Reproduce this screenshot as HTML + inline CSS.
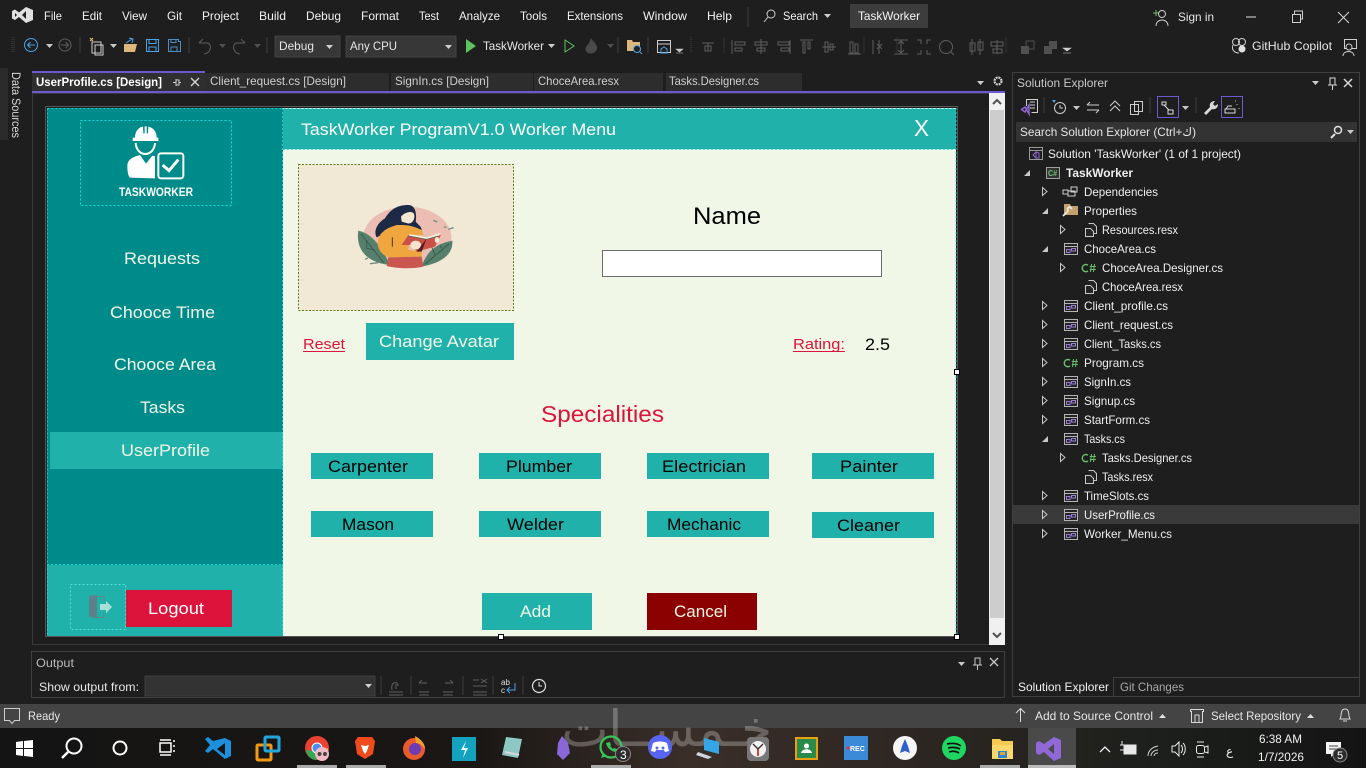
<!DOCTYPE html>
<html><head><meta charset="utf-8"><title>TaskWorker</title>
<style>
html,body{margin:0;padding:0;background:#1e1e1e;overflow:hidden}
svg{display:block}
text{font-family:"Liberation Sans","DejaVu Sans",sans-serif;font-size:12px;fill:#e6e6e6;white-space:pre}
.m text{font-size:12px;fill:#f1f1f1}
.d{font-size:17px}
.tr text{font-size:12px;fill:#efefef}
.ic{fill:none;stroke:#cfcfcf;stroke-width:1}
.dim{fill:none;stroke:#5e5e5e;stroke-width:1}
</style></head><body>
<svg width="1366" height="768" viewBox="0 0 1366 768" xmlns="http://www.w3.org/2000/svg">
<defs>
<symbol id="form" viewBox="0 0 16 16" overflow="visible"><rect x="1.500" y="2.500" width="13" height="11" fill="#252526" stroke="#b4b4b4"/><path d="M2 5.500h12" stroke="#b4b4b4"/><rect x="3.500" y="8.500" width="3.500" height="3" fill="none" stroke="#9a7fd6"/><rect x="8.500" y="7.500" width="4" height="2.500" fill="none" stroke="#9a7fd6"/></symbol>
<symbol id="doc" viewBox="0 0 16 16" overflow="visible"><path d="M5.500 1.500h5l3 3v7h-3M2.500 6.500h5l3 3v5h-8z" fill="#252526" stroke="#c8c8c8"/></symbol>
<symbol id="cs" viewBox="0 0 16 16" overflow="visible"><path d="M7 5.200A3.600 3.600 0 1 0 7 11" fill="none" stroke="#69c06a" stroke-width="1.400"/><path d="M10.500 4l-1 8M13.500 4l-1 8M8.800 6.500h6M8.800 9.500h6" stroke="#69c06a"/></symbol>
</defs>

<rect width="1366" height="768" fill="#1e1e1e"/>

<!-- VS logo -->
<path d="M26 7l7 3v10l-7 3-7-6-4 3-3-1.500V11l3-1.500 4 3zM26 11l-4 4 4 4zM15 13v4l2-2z" fill="#e0e0e0" fill-rule="evenodd"/>

<!-- menu -->
<g class="m">
<text x="44" y="20" textLength="18" lengthAdjust="spacingAndGlyphs">File</text>
<text x="82" y="20" textLength="20" lengthAdjust="spacingAndGlyphs">Edit</text>
<text x="122" y="20" textLength="25" lengthAdjust="spacingAndGlyphs">View</text>
<text x="167" y="20" textLength="15" lengthAdjust="spacingAndGlyphs">Git</text>
<text x="202" y="20" textLength="37" lengthAdjust="spacingAndGlyphs">Project</text>
<text x="259" y="20" textLength="27" lengthAdjust="spacingAndGlyphs">Build</text>
<text x="306" y="20" textLength="35" lengthAdjust="spacingAndGlyphs">Debug</text>
<text x="361" y="20" textLength="38" lengthAdjust="spacingAndGlyphs">Format</text>
<text x="419" y="20" textLength="20" lengthAdjust="spacingAndGlyphs">Test</text>
<text x="459" y="20" textLength="41" lengthAdjust="spacingAndGlyphs">Analyze</text>
<text x="520" y="20" textLength="27" lengthAdjust="spacingAndGlyphs">Tools</text>
<text x="567" y="20" textLength="56" lengthAdjust="spacingAndGlyphs">Extensions</text>
<text x="643" y="20" textLength="44" lengthAdjust="spacingAndGlyphs">Window</text>
<text x="707" y="20" textLength="25" lengthAdjust="spacingAndGlyphs">Help</text>
<text x="783" y="20" textLength="35" lengthAdjust="spacingAndGlyphs">Search</text>
</g>
<path d="M748 7v20" stroke="#3f3f3f"/>
<circle cx="771" cy="14" r="4" fill="none" stroke="#d0d0d0"/><path d="M768 17l-4 5" stroke="#d0d0d0"/>
<path d="M824 14h7l-3.500 4z" fill="#d0d0d0"/>
<rect x="850" y="4" width="78" height="24" fill="#3d3d3d"/>
<text x="858" y="20" textLength="62" lengthAdjust="spacingAndGlyphs" style="fill:#f5f5f5">TaskWorker</text>
<!-- sign in -->
<path d="M1153 13h6M1156 10v6" stroke="#67c15e"/><circle cx="1162" cy="14" r="3.500" class="ic"/><path d="M1156 26c0-8 12-8 12 0" class="ic"/>
<text x="1178" y="21" textLength="36" lengthAdjust="spacingAndGlyphs">Sign in</text>
<path d="M1246 17h10" stroke="#e0e0e0"/>
<rect x="1292.500" y="14.500" width="8" height="8" class="ic"/><path d="M1294.500 14v-3h8v8h-2" class="ic"/>
<path d="M1338 12l11 11M1349 12l-11 11" stroke="#d8d8d8"/>

<!-- toolbar -->
<path d="M12 37v16M14 37v16" stroke="#444" stroke-dasharray="1 1"/>
<circle cx="31" cy="45" r="6.500" fill="none" stroke="#4aa3e8"/><path d="M35 45h-7M30.500 42l-3 3 3 3" fill="none" stroke="#4aa3e8"/>
<path d="M46 44h7l-3.500 4z" fill="#c8c8c8"/>
<circle cx="65" cy="45" r="6" class="dim"/><path d="M61 45h7M65.500 42l3 3-3 3" class="dim"/>
<path d="M80 37v16" stroke="#3f3f3f"/>
<rect x="92" y="42" width="9" height="11" class="ic"/><rect x="96" y="46" width="8" height="10" class="ic" transform="translate(-1,-1)"/><path d="M90 38l3 3M93 38l-3 3" stroke="#e2c275"/>
<path d="M110 44h7l-3.500 4z" fill="#c8c8c8"/>
<path d="M124 44h13l-2 8h-11z" fill="#dcb67a"/><path d="M126 43l6-4M129 38l4 1-1 4" fill="none" stroke="#4aa3e8"/>
<path d="M146.500 39.500h12v12h-12zM149 39.500v4h7v-4M149 51v-4h7v4" fill="none" stroke="#4aa3e8"/>
<path d="M168.500 39.500h10v2h2v10h-12zM171 39.500v3h5v-3M171 51v-4h6v4" fill="none" stroke="#4a8fc8"/>
<path d="M189 37v16" stroke="#3f3f3f"/>
<path d="M199 43l4-4M199 43h8c5 0 5 10-3 11" class="dim"/><path d="M219 44h7l-3.500 4z" fill="#505050"/>
<path d="M245 43l-4-4M245 43h-8c-5 0-5 10 3 11" class="dim"/><path d="M254 44h7l-3.500 4z" fill="#505050"/>
<path d="M267 37v16" stroke="#3f3f3f"/>
<rect x="275" y="36" width="65" height="21" fill="#373737" stroke="#434343"/>
<text x="279" y="50" textLength="35" lengthAdjust="spacingAndGlyphs">Debug</text><path d="M326 45h7l-3.500 4z" fill="#d0d0d0"/>
<rect x="346" y="36" width="110" height="21" fill="#373737" stroke="#434343"/>
<text x="350" y="50" textLength="47" lengthAdjust="spacingAndGlyphs">Any CPU</text><path d="M445 45h7l-3.500 4z" fill="#d0d0d0"/>
<path d="M466 39l10 7-10 7z" fill="#5fc45f"/>
<text x="483" y="50" textLength="61" lengthAdjust="spacingAndGlyphs">TaskWorker</text>
<path d="M548 44h7l-3.500 4z" fill="#d0d0d0"/>
<path d="M565 40l9 6-9 6z" fill="none" stroke="#5fc45f"/>
<path d="M591 38c3 5 6 6 6 10 0 6-9 7-11 3-2-5 3-5 5-13z" fill="#4a4a4a"/><path d="M607 44h7l-3.500 4z" fill="#505050"/>
<path d="M618 37v16" stroke="#3f3f3f"/>
<path d="M627 40h5l1 2h7v9h-13z" fill="#dcb67a"/><circle cx="637" cy="49" r="3.500" fill="#222" stroke="#4aa3e8"/><path d="M640 52l2 2" stroke="#4aa3e8"/>
<path d="M648 37v16" stroke="#3f3f3f"/>
<rect x="657.500" y="40.500" width="13" height="12" class="ic"/><path d="M657 44h13" class="ic"/><path d="M661 53v-4l3-2 3 2v4z" fill="none" stroke="#4aa3e8"/>
<path d="M676 49h7l-3.500 3zM676 53h7" fill="#c8c8c8" stroke="#c8c8c8" stroke-width=".6"/>
<path d="M691 37v16" stroke="#444" stroke-dasharray="1 1"/>
<path d="M702 43h12M708 43v8M705 46h6v5h-6z" class="dim"/>
<path d="M724 37v16M897 37v16M1006 37v16M864 37v16" stroke="#333"/>
<path d="M732 40v14M735 42h10v3h-10zM735 48h7v3h-7z" class="dim"/>
<path d="M761 39v15M755 42h12v3h-12zM757 48h8v3h-8z" class="dim"/>
<path d="M790 40v14M778 42h11v3h-11zM781 48h8v3h-8z" class="dim"/>
<path d="M800 40h13M803 42v11h2V42zM808 42v7h2v-7z" class="dim"/>
<path d="M822 47h14M825 42h3v10h-3zM830 44h3v6h-3z" class="dim"/>
<path d="M848 54h13M850 42v11h3V42zM855 44v9h3V44z" class="dim"/>
<path d="M873 40v14M879 40v14M877 44l5 5M882 44l-5 5" class="dim"/>
<path d="M894 40h14M894 54h14M901 41v12M898 44l3-3 3 3M898 50l3 3 3-3" class="dim"/>
<path d="M917 40h4v4M931 40h-4v4M917 54h4v-4M931 54h-4v-4" class="dim"/>
<circle cx="946" cy="47" r="6.500" class="dim"/><path d="M951 52l3 3" class="dim"/>
<path d="M972 39v16M980 39v16M970 43h5v8h-5zM978 42h5v8h-5z" class="dim"/>
<path d="M996 47h1M997 40v14M991 42h12v4h-12zM993 49h9v4h-9z" class="dim"/>
<path d="M1021 46h8v8h-8z" fill="#505050"/><path d="M1026 41h8v8h-8z" fill="none" stroke="#505050"/>
<path d="M1044 46h8v8h-8zM1049 41h8v8h-8z" fill="#505050"/>
<path d="M1063 48h8l-4 3zM1063 53h8" fill="#d0d0d0" stroke="#d0d0d0" stroke-width=".6"/>
<!-- copilot -->
<circle cx="1236" cy="42" r="3.500" class="ic"/><circle cx="1242" cy="42" r="3.500" class="ic"/><path d="M1233 45c-2 5 2 8 6 8" class="ic"/><circle cx="1242" cy="49" r="3.500" fill="#e0e0e0"/>
<text x="1252" y="50" textLength="80" lengthAdjust="spacingAndGlyphs">GitHub Copilot</text>
<rect x="1344.500" y="39.500" width="12" height="9" class="ic"/><circle cx="1349" cy="47" r="3" fill="#1e1e1e" stroke="#cfcfcf"/><path d="M1343 56c0-6 11-6 11 0" class="ic"/>

<!-- data sources vertical tab -->
<rect x="0" y="68" width="8" height="72" fill="#2b2b2b"/>
<text transform="translate(12,72) rotate(90)" textLength="66" lengthAdjust="spacingAndGlyphs" style="fill:#d8d8d8">Data Sources</text>

<!-- document tabs -->
<rect x="32" y="72" width="173" height="20" fill="#2f2f2f"/>
<rect x="32" y="71" width="173" height="2" fill="#6a5acd"/>
<rect x="32" y="91" width="973" height="2" fill="#6a5acd"/>
<rect x="205" y="73" width="184" height="18" fill="#2d2d2d"/>
<rect x="391" y="73" width="142" height="18" fill="#2d2d2d"/>
<rect x="534" y="73" width="129" height="18" fill="#2d2d2d"/>
<rect x="666" y="73" width="136" height="18" fill="#2d2d2d"/>
<text x="36" y="86" textLength="126" lengthAdjust="spacingAndGlyphs" style="fill:#fff;font-weight:700">UserProfile.cs [Design]</text>
<path d="M176 79v7M173 82.500h3M176 80h3v5h-3M179 82.500h2" stroke="#cfcfcf" fill="none"/>
<path d="M191 78l8 8M199 78l-8 8" stroke="#d8d8d8" stroke-width="1.300"/>
<text x="210" y="85" textLength="136" lengthAdjust="spacingAndGlyphs" style="fill:#cfcfcf">Client_request.cs [Design]</text>
<text x="395" y="85" textLength="94" lengthAdjust="spacingAndGlyphs" style="fill:#cfcfcf">SignIn.cs [Design]</text>
<text x="538" y="85" textLength="81" lengthAdjust="spacingAndGlyphs" style="fill:#cfcfcf">ChoceArea.resx</text>
<text x="669" y="85" textLength="90" lengthAdjust="spacingAndGlyphs" style="fill:#cfcfcf">Tasks.Designer.cs</text>
<path d="M977 81h7l-3.500 4z" fill="#d0d0d0"/>
<circle cx="998" cy="81" r="3.500" fill="none" stroke="#d0d0d0" stroke-width="2.200" stroke-dasharray="2 .8"/>

<!-- designer frame -->
<rect x="32.500" y="93.500" width="972" height="551" fill="#1e1e1e" stroke="#3a3a3a"/>
<rect x="989" y="93" width="16" height="552" fill="#f0f0f0"/>
<rect x="990" y="110" width="14" height="508" fill="#cdcdcd"/>
<path d="M993 104l4-4 4 4" fill="none" stroke="#505050" stroke-width="2"/>
<path d="M993 633l4 4 4-4" fill="none" stroke="#505050" stroke-width="2"/>

<!-- form -->
<rect x="45.500" y="106.500" width="912" height="530" fill="#1e1e1e" stroke="#555"/>
<rect x="47" y="108" width="909" height="528" fill="#f0f7e6"/>
<rect x="47" y="108" width="236" height="528" fill="#008b8b"/>
<rect x="283" y="109" width="673" height="40" fill="#20b2aa"/>
<rect x="47" y="565" width="236" height="71" fill="#20b2aa"/>
<rect x="50" y="432" width="233" height="37" fill="#20b2aa"/>
<path d="M47.500 108.500h908.500v527M47.500 108.500v527M282.500 108v528M283 149.500h673M47 564.500h236" fill="none" stroke="#19e0dc" stroke-dasharray="2 2" opacity=".85"/>
<text x="301" y="135" textLength="315" lengthAdjust="spacingAndGlyphs" style="font-size:17px;fill:#fff">TaskWorker ProgramV1.0 Worker Menu</text>
<text x="914" y="136" textLength="15" lengthAdjust="spacingAndGlyphs" style="font-size:23px;fill:#fff">X</text>

<!-- logo -->
<rect x="80.500" y="120.500" width="151" height="85" fill="none" stroke="#14e0dc" stroke-dasharray="2 2"/>
<g transform="translate(40,105) scale(.33333)" fill="#fff">
<path d="M285 98c0-20 12-32 24-33l1 20 4 0 0-21 6 0 0 21 4 0 1-20c13 2 25 14 25 33h5v10h-77v-10z"/>
<path d="M287 114c3 44 55 44 58 0" fill="none" stroke="#fff" stroke-width="6"/>
<path d="M262 182c0-16 13-26 38-32l18 26 19-24 8 2v66l-75-2c-6-4-8-20-8-36z"/>
<rect x="355" y="145" width="75" height="75" rx="8" fill="none" stroke="#fff" stroke-width="6"/>
<path d="M368 180l19 17 28-33" fill="none" stroke="#fff" stroke-width="9"/>
</g>
<text x="119" y="196" textLength="74" lengthAdjust="spacingAndGlyphs" style="font-size:12px;font-weight:700;fill:#fff">TASKWORKER</text>

<!-- sidebar text -->
<g>
<text x="124" y="264" textLength="76" lengthAdjust="spacingAndGlyphs" style="font-size:17px;fill:#f2f7e8">Requests</text>
<text x="110" y="318" textLength="105" lengthAdjust="spacingAndGlyphs" style="font-size:17px;fill:#f2f7e8">Chooce Time</text>
<text x="114" y="370" textLength="102" lengthAdjust="spacingAndGlyphs" style="font-size:17px;fill:#f2f7e8">Chooce Area</text>
<text x="140" y="413" textLength="45" lengthAdjust="spacingAndGlyphs" style="font-size:17px;fill:#f2f7e8">Tasks</text>
<text x="121" y="456" textLength="89" lengthAdjust="spacingAndGlyphs" style="font-size:17px;fill:#f2f7e8">UserProfile</text>
</g>

<!-- logout -->
<rect x="70.500" y="584.500" width="55" height="45" fill="none" stroke="#4fe0dc" stroke-dasharray="2 2"/>
<path d="M89 596l8-1v23l-8-1z" fill="#5f7f8a"/><path d="M97 596.500h7v5M97 617.500h7v-5" fill="none" stroke="#5f8585"/>
<path d="M100 604h6v-3l6 6-6 6v-3h-6z" fill="#a8e0d8"/>
<rect x="126" y="590" width="106" height="37" fill="#dc143c"/>
<text x="148" y="614" textLength="56" lengthAdjust="spacingAndGlyphs" style="font-size:17px;fill:#fff">Logout</text>

<!-- avatar -->
<rect x="298.500" y="164.500" width="215" height="146" fill="#f1e8d6" stroke="#5c7a10" stroke-dasharray="2 1.500"/>
<g transform="translate(295,160) scale(.33333)">
<ellipse cx="337" cy="232" rx="132" ry="92" fill="#ecbdb2"/>
<path d="M190 212C230 220 260 260 285 315 230 310 180 280 190 212z" fill="#567f6c"/>
<path d="M472 242C430 250 395 270 380 320 430 310 475 290 472 242z" fill="#567f6c"/>
<path d="M198 222l68 86M462 252l-72 60M215 240v25M240 270l-25-5M420 285l-10-25M440 265l-5-10" stroke="#33574a" stroke-width="2.500" fill="none"/>
<path d="M340 135C365 135 365 170 362 185 370 195 380 200 380 210L300 205 245 232C235 215 245 190 270 175 285 150 305 135 340 135z" fill="#1c2a45"/>
<path d="M318 170C330 155 355 150 358 165 360 180 350 193 338 190L320 185z" fill="#f6e6d2"/>
<path d="M305 195C325 195 345 193 380 210L385 225 345 225 340 270 380 275 380 290 280 292C250 280 240 250 255 225 270 205 290 200 305 195z" fill="#efa63e"/>
<path d="M292 232v28" stroke="#4a331c" stroke-width="3"/>
<path d="M280 292L380 290 385 320C350 328 300 325 275 318z" fill="#cb564f"/>
<path d="M320 255L340 225 395 235 438 225 420 260 390 268 365 275 350 255z" fill="#cc5048"/>
<path d="M342 222L395 232 438 218 430 228 395 238 342 228z" fill="#f5efdd"/>
<path d="M342 228L395 238 430 228" fill="none" stroke="#3e6a55" stroke-width="2"/>
<path d="M365 275L395 235 380 275z" fill="#4e2020"/>
<ellipse cx="362" cy="255" rx="16" ry="13" fill="#f7e5d0"/>
<ellipse cx="426" cy="240" rx="7" ry="9" fill="#f7e5d0"/>
<path d="M415 181l12 5M447 200l7 3M460 208l16-5M210 298l9-4M225 311l25-3" stroke="#6d8f81" stroke-width="4" fill="none"/>
</g>

<!-- Form controls -->
<text x="693" y="224" textLength="68" lengthAdjust="spacingAndGlyphs" style="font-size:24px;fill:#000">Name</text>
<rect x="602.500" y="250.500" width="279" height="26" fill="#fff" stroke="#6c6c6c"/>
<text x="303" y="349" textLength="42" lengthAdjust="spacingAndGlyphs" style="font-size:15px;fill:#dc143c">Reset</text><path d="M303 351.500h42" stroke="#dc143c"/>
<rect x="366" y="323" width="148" height="37" fill="#20b2aa"/>
<text x="379" y="347" textLength="120" lengthAdjust="spacingAndGlyphs" style="font-size:17px;fill:#f2f7e8">Change Avatar</text>
<text x="793" y="349" textLength="52" lengthAdjust="spacingAndGlyphs" style="font-size:15px;fill:#dc143c">Rating:</text><path d="M793 351.500h52" stroke="#dc143c"/>
<text x="865" y="350" textLength="25" lengthAdjust="spacingAndGlyphs" style="font-size:17px;fill:#000">2.5</text>
<text x="541" y="422" textLength="123" lengthAdjust="spacingAndGlyphs" style="font-size:23px;fill:#dc143c">Specialities</text>

<g fill="#20b2aa">
<rect x="311" y="453" width="122" height="26"/><rect x="479" y="453" width="122" height="26"/><rect x="647" y="453" width="122" height="26"/><rect x="812" y="453" width="122" height="26"/>
<rect x="311" y="511" width="122" height="26"/><rect x="479" y="511" width="122" height="26"/><rect x="647" y="511" width="122" height="26"/><rect x="812" y="512" width="122" height="26"/>
</g>
<g>
<text x="328" y="472" textLength="80" lengthAdjust="spacingAndGlyphs" style="font-size:17px;fill:#000">Carpenter</text>
<text x="506" y="472" textLength="66" lengthAdjust="spacingAndGlyphs" style="font-size:17px;fill:#000">Plumber</text>
<text x="662" y="472" textLength="84" lengthAdjust="spacingAndGlyphs" style="font-size:17px;fill:#000">Electrician</text>
<text x="840" y="472" textLength="58" lengthAdjust="spacingAndGlyphs" style="font-size:17px;fill:#000">Painter</text>
<text x="342" y="530" textLength="52" lengthAdjust="spacingAndGlyphs" style="font-size:17px;fill:#000">Mason</text>
<text x="507" y="530" textLength="57" lengthAdjust="spacingAndGlyphs" style="font-size:17px;fill:#000">Welder</text>
<text x="667" y="530" textLength="74" lengthAdjust="spacingAndGlyphs" style="font-size:17px;fill:#000">Mechanic</text>
<text x="837" y="531" textLength="63" lengthAdjust="spacingAndGlyphs" style="font-size:17px;fill:#000">Cleaner</text>
</g>
<rect x="482" y="593" width="110" height="37" fill="#20b2aa"/>
<text x="520" y="617" textLength="31" lengthAdjust="spacingAndGlyphs" style="font-size:17px;fill:#f2f7e8">Add</text>
<rect x="647" y="593" width="110" height="37" fill="#8b0000"/>
<text x="674" y="617" textLength="53" lengthAdjust="spacingAndGlyphs" style="font-size:17px;fill:#f2f7e8">Cancel</text>

<!-- handles -->
<g fill="#fff" stroke="#000"><rect x="954.500" y="369.500" width="5" height="5"/><rect x="498.500" y="634.500" width="5" height="5"/><rect x="954.500" y="634.500" width="5" height="5"/></g>

<!-- solution explorer -->
<rect x="1012.500" y="72.500" width="347" height="624" fill="#1e1e1e" stroke="#3f3f3f"/>
<path d="M1012.500 677.500V696.500H1113.500V677.500H1359.500" fill="none" stroke="#3f3f3f"/>
<rect x="1014" y="678" width="99" height="18" fill="#1e1e1e"/>
<text x="1017" y="87" textLength="91" lengthAdjust="spacingAndGlyphs" style="fill:#c8c8c8">Solution Explorer</text>
<path d="M1312 81h7l-3.500 4z" fill="#d0d0d0"/>
<path d="M1330 78h5v7h-5zM1332.500 85v5M1328 85h9" fill="none" stroke="#d8d8d8"/>
<path d="M1344 79l8 8M1352 79l-8 8" stroke="#d8d8d8" stroke-width="1.500"/>
<!-- SE toolbar -->
<path d="M1026.500 106v-6.500h11v13h-6M1030 102h5M1030 105h5M1030 108h5" fill="none" stroke="#cfcfcf"/><path d="M1021 110l4-3 4 7 0-9-4 7-4-3" fill="none" stroke="#8d66cf" stroke-width="1.500"/>
<path d="M1044 97v16" stroke="#3f3f3f"/>
<path d="M1052 100h4l-2 3z" fill="#4aa3e8"/><circle cx="1060" cy="108" r="5.500" class="ic"/><path d="M1060 105v3h3" class="ic"/>
<path d="M1073 106h7l-3.500 4z" fill="#c8c8c8"/>
<path d="M1087 105h12M1087 105l3-3M1099 110h-12M1099 110l-3 3" class="ic"/>
<path d="M1110 106l5-5 5 5M1110 111l5-5 5 5" class="ic"/>
<rect x="1134.500" y="101.500" width="8" height="10" class="ic"/><rect x="1130.500" y="104.500" width="8" height="10" class="ic"/>
<path d="M1150 97v16" stroke="#3f3f3f"/>
<rect x="1157.500" y="96.500" width="21" height="21" fill="none" stroke="#6a5acd" stroke-width="1"/>
<path d="M1162 102h4v3h-4zM1168 110h5v4h-5zM1164 105l5 5" fill="none" stroke="#d8d8d8"/>
<path d="M1182 106h7l-3.500 4z" fill="#c8c8c8"/>
<path d="M1196 97v16" stroke="#3f3f3f"/>
<path d="M1204 113l6-6c-1-3 1-6 5-6l-2 3 2 2 3-2c0 4-3 6-6 5l-6 6z" fill="#d8d8d8"/>
<rect x="1221.500" y="96.500" width="21" height="21" fill="none" stroke="#6a5acd"/>
<path d="M1225 109h10v4h-10zM1226 109l2-3h4" fill="none" stroke="#d8d8d8"/><path d="M1237 104v1M1239 108v1M1235 101h1" stroke="#e2c275"/>
<!-- search -->
<rect x="1016" y="122" width="341" height="20" fill="#333"/>
<text x="1020" y="136" textLength="176" lengthAdjust="spacingAndGlyphs">Search Solution Explorer (Ctrl+ك)</text>
<circle cx="1338" cy="130" r="3.500" fill="none" stroke="#e0e0e0" stroke-width="1.500"/><path d="M1335 134l-4 4" stroke="#e0e0e0" stroke-width="2"/>
<path d="M1347 130h7l-3.500 4z" fill="#c8c8c8"/>

<rect x="1013" y="505" width="346" height="19" fill="#3a3a3a"/>

<!-- tree icons -->
<g>
<rect x="1029.500" y="147.500" width="13" height="12" fill="none" stroke="#9a9a9a"/><path d="M1029 150.500h13" stroke="#9a9a9a"/><path d="M1033 155l3 3v-6l-3 3zM1036 152l3 1v5l-3 0" fill="none" stroke="#8d66cf"/>
<rect x="1046.500" y="167.500" width="13" height="11" fill="#333" stroke="#a0a0a0"/>
<text x="1048" y="176" textLength="9" lengthAdjust="spacingAndGlyphs" style="font-size:8px;font-weight:700;fill:#6fc16f">C#</text>
<rect x="1063" y="190" width="5" height="4" fill="none" stroke="#cfcfcf"/><rect x="1071" y="187" width="6" height="5" fill="none" stroke="#cfcfcf"/><rect x="1068" y="191" width="7" height="5" fill="none" stroke="#cfcfcf"/>
<path d="M1064 204h6l1 2h7v9h-14z" fill="#c4a06c"/><path d="M1063 216l5-5c-1-2 0-4 2-4l2 2" fill="none" stroke="#e8e8e8" stroke-width="1.800"/>
<use href="#doc" x="1083" y="222" width="16" height="16"/>
<use href="#form" x="1063" y="241" width="16" height="16"/>
<use href="#cs" x="1081" y="260" width="16" height="16"/>
<use href="#doc" x="1083" y="279" width="16" height="16"/>
<use href="#form" x="1063" y="298" width="16" height="16"/>
<use href="#form" x="1063" y="317" width="16" height="16"/>
<use href="#form" x="1063" y="336" width="16" height="16"/>
<use href="#cs" x="1063" y="355" width="16" height="16"/>
<use href="#form" x="1063" y="374" width="16" height="16"/>
<use href="#form" x="1063" y="393" width="16" height="16"/>
<use href="#form" x="1063" y="412" width="16" height="16"/>
<use href="#form" x="1063" y="431" width="16" height="16"/>
<use href="#cs" x="1081" y="450" width="16" height="16"/>
<use href="#doc" x="1083" y="469" width="16" height="16"/>
<use href="#form" x="1063" y="488" width="16" height="16"/>
<use href="#form" x="1063" y="507" width="16" height="16"/>
<use href="#form" x="1063" y="526" width="16" height="16"/>
</g>
<!-- arrows -->
<g fill="none" stroke="#c8c8c8">
<path d="M1042.500 187.500l4.500 4-4.500 4zM1060.500 225.500l4.500 4-4.500 4zM1060.500 263.500l4.500 4-4.500 4zM1042.500 301.500l4.500 4-4.500 4zM1042.500 320.500l4.500 4-4.500 4zM1042.500 339.500l4.500 4-4.500 4zM1042.500 358.500l4.500 4-4.500 4zM1042.500 377.500l4.500 4-4.500 4zM1042.500 396.500l4.500 4-4.500 4zM1042.500 415.500l4.500 4-4.500 4zM1060.500 453.500l4.500 4-4.500 4zM1042.500 491.500l4.500 4-4.500 4zM1042.500 510.500l4.500 4-4.500 4zM1042.500 529.500l4.500 4-4.500 4z"/>
</g>
<g fill="#c8c8c8">
<path d="M1024 177h6v-6zM1042 215h6v-6zM1042 253h6v-6zM1042 443h6v-6z" transform="translate(0,-1)"/>
</g>
<g class="tr">
<text x="1048" y="158" textLength="193" lengthAdjust="spacingAndGlyphs">Solution 'TaskWorker' (1 of 1 project)</text>
<text x="1066" y="177" textLength="67" lengthAdjust="spacingAndGlyphs" style="font-weight:700">TaskWorker</text>
<text x="1084" y="196" textLength="74" lengthAdjust="spacingAndGlyphs">Dependencies</text>
<text x="1084" y="215" textLength="53" lengthAdjust="spacingAndGlyphs">Properties</text>
<text x="1102" y="234" textLength="76" lengthAdjust="spacingAndGlyphs">Resources.resx</text>
<text x="1084" y="253" textLength="72" lengthAdjust="spacingAndGlyphs">ChoceArea.cs</text>
<text x="1102" y="272" textLength="121" lengthAdjust="spacingAndGlyphs">ChoceArea.Designer.cs</text>
<text x="1102" y="291" textLength="81" lengthAdjust="spacingAndGlyphs">ChoceArea.resx</text>
<text x="1084" y="310" textLength="84" lengthAdjust="spacingAndGlyphs">Client_profile.cs</text>
<text x="1084" y="329" textLength="89" lengthAdjust="spacingAndGlyphs">Client_request.cs</text>
<text x="1084" y="348" textLength="77" lengthAdjust="spacingAndGlyphs">Client_Tasks.cs</text>
<text x="1084" y="367" textLength="60" lengthAdjust="spacingAndGlyphs">Program.cs</text>
<text x="1084" y="386" textLength="47" lengthAdjust="spacingAndGlyphs">SignIn.cs</text>
<text x="1084" y="405" textLength="51" lengthAdjust="spacingAndGlyphs">Signup.cs</text>
<text x="1084" y="424" textLength="66" lengthAdjust="spacingAndGlyphs">StartForm.cs</text>
<text x="1084" y="443" textLength="41" lengthAdjust="spacingAndGlyphs">Tasks.cs</text>
<text x="1102" y="462" textLength="90" lengthAdjust="spacingAndGlyphs">Tasks.Designer.cs</text>
<text x="1102" y="481" textLength="51" lengthAdjust="spacingAndGlyphs">Tasks.resx</text>
<text x="1084" y="500" textLength="65" lengthAdjust="spacingAndGlyphs">TimeSlots.cs</text>
<text x="1084" y="519" textLength="71" lengthAdjust="spacingAndGlyphs">UserProfile.cs</text>
<text x="1084" y="538" textLength="88" lengthAdjust="spacingAndGlyphs">Worker_Menu.cs</text>
</g>
<text x="1018" y="691" textLength="91" lengthAdjust="spacingAndGlyphs" style="fill:#f1f1f1">Solution Explorer</text>
<text x="1120" y="691" textLength="64" lengthAdjust="spacingAndGlyphs" style="fill:#a8a8a8">Git Changes</text>

<!-- output panel -->
<rect x="31.500" y="651.500" width="973" height="46" fill="#1e1e1e" stroke="#3f3f3f"/>
<text x="36" y="667" textLength="38" lengthAdjust="spacingAndGlyphs" style="fill:#b8b8b8">Output</text>
<text x="39" y="691" textLength="100" lengthAdjust="spacingAndGlyphs">Show output from:</text>
<rect x="145" y="676" width="230" height="20" fill="#333" stroke="#3f3f3f"/>
<path d="M365 684h7l-3.500 4z" fill="#d0d0d0"/>
<path d="M381 676v19M411 676v19M463 676v19M493 676v19M523 676v19" stroke="#3f3f3f"/>
<path d="M389 692h14M389 695h14M392 690c-2-8 6-10 6-4M396 684v5" fill="none" stroke="#5e5e5e"/>
<path d="M419 692h10M419 695h10M419 683h8M419 683l3-3M443 692h10M443 695h10M445 683h8M453 683l-3-3" fill="none" stroke="#5e5e5e"/>
<path d="M473 680h6M473 692h14M473 695h14M473 686h14M481 679l6 4M487 679l-6 4" fill="none" stroke="#5e5e5e"/>
<text x="501" y="685" style="font-size:8px;fill:#e0e0e0">ab</text><text x="501" y="693" style="font-size:8px;fill:#e0e0e0">c</text>
<path d="M515 683v7h-7M510 687l-3 3 3 3" fill="none" stroke="#4aa3e8"/>
<circle cx="539" cy="686" r="6.500" fill="none" stroke="#e0e0e0" stroke-width="1.200"/><path d="M539 682v4h3" fill="none" stroke="#e0e0e0"/>
<path d="M958 662h7l-3.500 4z" fill="#c8c8c8"/>
<path d="M975 658h5v7h-5zM977.500 665v5M973 665h9" fill="none" stroke="#c8c8c8"/>
<path d="M990 658l8 8M998 658l-8 8" stroke="#c8c8c8" stroke-width="1.300"/>

<!-- status bar -->
<rect x="0" y="704" width="1366" height="24" fill="#444"/>
<path d="M4.500 708.500h15v12h-5l-2.500 3-2.500-3h-5z" fill="none" stroke="#cfcfcf"/>
<text x="28" y="720" textLength="32" lengthAdjust="spacingAndGlyphs">Ready</text>
<path d="M1020.500 722v-13M1016 713l4.500-4.500 4.500 4.500" fill="none" stroke="#d8d8d8"/>
<text x="1035" y="720" textLength="118" lengthAdjust="spacingAndGlyphs">Add to Source Control</text>
<path d="M1159 718h7l-3.500-4z" fill="#e0e0e0"/>
<path d="M1190.500 709.500h13v2h-1v11h-11v-11h-1zM1195 722v-7h4v7" fill="none" stroke="#d8d8d8"/>
<text x="1211" y="720" textLength="90" lengthAdjust="spacingAndGlyphs">Select Repository</text>
<path d="M1307 718h7l-3.500-4z" fill="#e0e0e0"/>
<path d="M1340 719c2-3 0-10 5-10s3 7 5 10zM1343 721h4" fill="none" stroke="#d8d8d8"/>

<!-- taskbar -->
<defs><linearGradient id="tb" x1="0" x2="1" y1="0" y2="0"><stop offset="0" stop-color="#141414"/><stop offset=".35" stop-color="#1a1715"/><stop offset=".5" stop-color="#3a2e28"/><stop offset=".68" stop-color="#2c2622"/><stop offset=".85" stop-color="#1c1f1c"/><stop offset="1" stop-color="#141414"/></linearGradient></defs>
<rect x="0" y="728" width="1366" height="40" fill="url(#tb)"/>
<rect x="1028" y="728" width="48" height="40" fill="#4a4a4a"/>
<rect x="980" y="765" width="40" height="3" fill="#aaa"/><rect x="1028" y="765" width="48" height="3" fill="#bbb"/>
<rect x="297" y="765" width="40" height="3" fill="#aaa"/><rect x="346" y="765" width="40" height="3" fill="#aaa"/><rect x="591" y="765" width="40" height="3" fill="#aaa"/>

<!-- watermark -->
<text x="772" y="746" direction="rtl" style="font-family:'DejaVu Sans',sans-serif;font-size:50px;fill:#fff;opacity:.26">خـمســات</text>

<!-- windows -->
<path d="M16 742l7-1v7h-7zM24 741l9-1v8h-9zM16 749h7v7l-7-1zM24 749h9v8l-9-1z" fill="#fff"/>
<circle cx="74" cy="746" r="7.500" fill="none" stroke="#fff" stroke-width="2"/><path d="M68 752l-6 6" stroke="#fff" stroke-width="2.500"/>
<circle cx="120" cy="748" r="6.500" fill="none" stroke="#fff" stroke-width="2"/>
<path d="M160 743h11v9h-11zM160 740h11M160 755h11M174 740v2M174 745v2M174 750v2" fill="none" stroke="#fff" stroke-width="1.500"/>
<!-- vscode -->
<path d="M225 738l6 3v15l-6 3-12-10-5 4-3-2 5-6-5-6 3-2 5 4zm0 5l-8 6 8 6z" fill="#1e8fdc"/>
<!-- app 268 -->
<rect x="257" y="745" width="14" height="15" rx="1" fill="none" stroke="#f39a12" stroke-width="3"/>
<rect x="265" y="737" width="14" height="14" rx="1" fill="none" stroke="#23a6dc" stroke-width="3"/>
<!-- chrome -->
<circle cx="317" cy="748" r="12" fill="#e84233"/>
<path d="M306 750a11 11 0 0 0 10 10l4-8z" fill="#31a853"/><path d="M328 748a11 11 0 0 1-10 12l5-9z" fill="#f8c020"/>
<circle cx="317" cy="748" r="5" fill="#4a8ef0" stroke="#fff"/>
<circle cx="322" cy="754" r="7" fill="#f4b9c4"/><circle cx="319.500" cy="754" r="2" fill="#444"/><circle cx="325" cy="754" r="2" fill="#444"/>
<!-- brave -->
<path d="M358 737h14l3 4-2 13-8 5-8-5-2-13z" fill="#f04a1d"/><path d="M361 745l4 1 4-1-2 6-2 3-2-3z" fill="#fff"/>
<!-- firefox -->
<circle cx="414" cy="749" r="11" fill="#ea5b2c"/><circle cx="415" cy="749" r="6" fill="#6d3bb4"/><path d="M415 736c6 3 10 8 10 13-2-3-5-6-9-6z" fill="#f8a227"/>
<!-- bolt -->
<rect x="452" y="737" width="24" height="24" fill="#13a3bf"/><path d="M466 741l-5 9h4l-2 8 5-10h-4z" fill="#e8fbff"/>
<!-- notepad -->
<path d="M506 737l16 2-4 19-16-3z" fill="#8ec8c2"/><path d="M505 752l14 3" stroke="#d8d8d8" stroke-width="2"/>
<!-- obsidian -->
<path d="M562 736l6 7 2 10-7 7-6-6 1-11z" fill="#8a67d6"/>
<!-- whatsapp -->
<circle cx="611" cy="747" r="10.500" fill="none" stroke="#35c75a" stroke-width="2.200"/><path d="M601 758l2-5 4 3z" fill="#35c75a"/><path d="M606 743c1 5 5 8 9 9l2-3-3-1-1 1-3-3 1-1-1-3z" fill="#35c75a"/>
<circle cx="623" cy="754" r="7.500" fill="#2c2c2c" stroke="#888"/><text x="620" y="759" style="font-size:12px;fill:#fff">3</text>
<!-- discord -->
<circle cx="660" cy="747" r="12" fill="#5865f2"/><path d="M653 743c4-2 10-2 14 0l2 8-4 1-1-2h-8l-1 2-4-1z" fill="#fff"/><circle cx="657" cy="748" r="1.500" fill="#5865f2"/><circle cx="663" cy="748" r="1.500" fill="#5865f2"/>
<!-- laptop -->
<path d="M704 738l15 4v12l-15-4z" fill="#35a7e6"/><path d="M698 752l14 5-4 2-12-4z" fill="#cfd6da"/>
<!-- clock -->
<rect x="747" y="737" width="22" height="24" rx="4" fill="#777"/><circle cx="758" cy="749" r="8" fill="#f2f2f2"/><path d="M758 749v7" stroke="#d03030" stroke-width="1.800"/><path d="M758 749l-5-5M758 749l5-5" stroke="#333" stroke-width="1.400"/>
<!-- classroom -->
<rect x="796" y="738" width="21" height="21" fill="#2a8a4a" stroke="#e8a010" stroke-width="2"/><circle cx="806.500" cy="746" r="2.500" fill="#fff"/><path d="M801 753c1-5 10-5 11 0z" fill="#fff"/>
<!-- rec -->
<rect x="844" y="736" width="24" height="24" fill="#3b8ad8"/><text x="850" y="751" style="font-size:7px;font-weight:700;fill:#fff">REC</text><circle cx="848" cy="748" r="1.500" fill="#e33"/>
<!-- app -->
<circle cx="905" cy="748" r="12" fill="#f5f5f5"/><path d="M905 739l3 7 2 7-5-2-5 2 2-7z" fill="#2d60c8"/>
<!-- spotify -->
<circle cx="954" cy="748" r="12" fill="#1ed760"/><path d="M947 744c5-1 10-1 14 2M948 748c4-1 8-1 12 1M949 752c3-1 7-1 10 1" fill="none" stroke="#111" stroke-width="1.700"/>
<!-- folder -->
<path d="M992 739h8l2 2h11v18h-21z" fill="#f6c94f"/><path d="M992 745h21v14h-21z" fill="#fbd86b"/><rect x="998" y="751" width="9" height="7" fill="#2d86d0"/><path d="M1000 752h5v3h-5z" fill="#e6a23a"/>
<!-- VS -->
<path d="M1054 737l7 3v18l-7 3-10-9-5 3-3-2v-10l3-2 5 3zm0 7l-6 5 6 5z" fill="#9068d8" fill-rule="evenodd"/>

<!-- tray -->
<path d="M1100 752l5-5 5 5" fill="none" stroke="#f0f0f0" stroke-width="1.300"/>
<rect x="1124" y="745" width="12" height="9" fill="#e8e8e8" stroke="#e8e8e8"/><path d="M1120 745h4M1120 750h4M1122 741v4" stroke="#e8e8e8"/>
<path d="M1148 756c0-5 4-9 10-10M1151 756c0-3 3-6 7-6M1154 756c0-2 2-3 4-3" fill="none" stroke="#d0d0d0"/>
<path d="M1172 746h3l4-4v14l-4-4h-3zM1181 745c2 2 2 6 0 8M1183 743c3 3 3 9 0 12" fill="none" stroke="#e8e8e8"/>
<rect x="1196.500" y="745.500" width="8" height="8" rx="2" fill="none" stroke="#e8e8e8"/><path d="M1205 747l3-1v7l-3-1M1197 742h7M1197 757h7" fill="none" stroke="#e8e8e8"/>
<text x="1226" y="755" style="font-size:12px;fill:#f0f0f0;font-family:'DejaVu Sans',sans-serif">ع</text>
<text x="1259" y="743" textLength="43" lengthAdjust="spacingAndGlyphs" style="fill:#f1f1f1">6:38 AM</text>
<text x="1258" y="761" textLength="46" lengthAdjust="spacingAndGlyphs" style="fill:#f1f1f1">1/7/2026</text>
<path d="M1326 742h15v12h-7l-3 3v-3h-5z" fill="#f5f5f5"/><path d="M1329 746h9M1329 749h9" stroke="#444"/>
<circle cx="1340" cy="755" r="7" fill="#2c2c2c" stroke="#888"/><text x="1337" y="759" style="font-size:11px;fill:#fff">5</text>
</svg>
</body></html>
